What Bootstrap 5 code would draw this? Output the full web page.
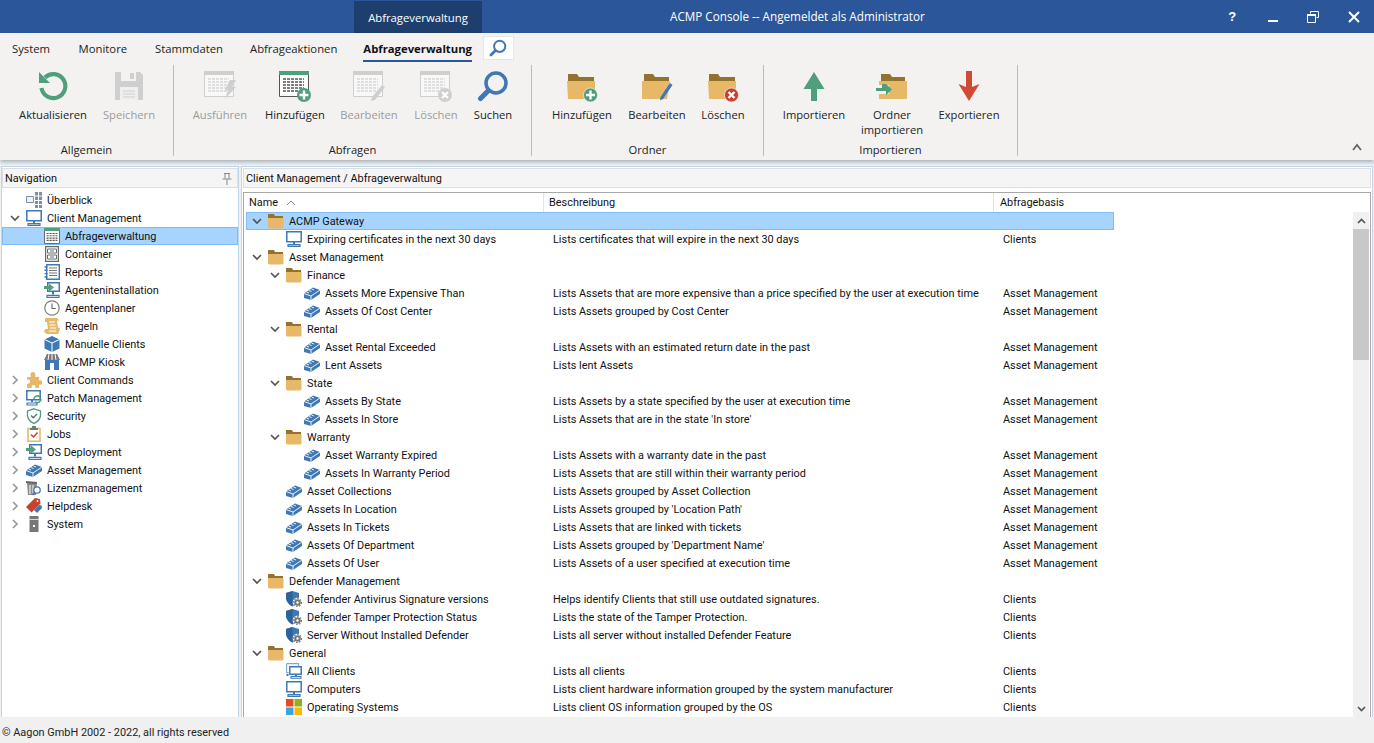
<!DOCTYPE html>
<html lang="de">
<head>
<meta charset="utf-8">
<title>ACMP Console</title>
<link href="https://cdn.jsdelivr.net/npm/bootstrap@5.3.0/dist/css/bootstrap.min.css" rel="stylesheet">
<style>
html,body{height:743px;overflow:hidden}
body{font-family:Roboto,"Liberation Sans",sans-serif;font-size:10.9px;color:#111;background:#f0f0f0;line-height:18px}
.titlebar{height:33px;background:#2b579a;color:#fff;flex:none;font-family:"Open Sans",sans-serif}
.ctxtab{margin-left:354px;margin-top:1px;width:128px;background:#1e3f6e;text-align:center;line-height:34px;font-size:11.3px}
.apptitle{margin-left:188px;width:540px;line-height:33px;font-size:11.7px}
.winbtn{width:40.5px;display:flex;align-items:center;justify-content:center;font-weight:700}
.winbtn svg{width:12px;height:12px}
.qhelp{font-size:13px;font-family:"Liberation Sans",sans-serif;margin-left:-7px}
.ribbon{background:#f3f2f1;height:127px;flex:none;box-shadow:0 2px 4px rgba(0,0,0,.28);position:relative;z-index:2;font-family:"Open Sans",sans-serif;font-size:11.2px}
.tabline{height:29px;padding-left:12px}
.rtab{margin-right:27px;line-height:15px;padding-top:8px;color:#222;font-size:11.3px}
.rtab.first{margin-right:28.5px}
.rtab.wide{margin-right:28px}
.rtab.tight{margin-right:26px}
.rtab.active{font-weight:700;margin-right:11px;position:relative;color:#111}
.rtab.active::after{content:"";position:absolute;left:0;right:0;top:27px;height:2px;background:#2b579a}
.searchbox{width:31px;height:24px;margin-top:3px;background:#fff;border:1px solid #e6e6e6;display:flex;align-items:center;justify-content:center}
.searchbox svg{width:18px;height:18px}
.rgroup{height:91px;border-right:1px solid #bdbbb9;margin-top:3px;flex:none;position:relative}
.rg1{width:174px;padding-left:15px}
.rg2{width:358px;padding-left:9px}
.rg3{width:232px;padding-left:13px}
.rg4{width:254px;padding-left:13px}
.rbtn{text-align:center;color:#222;line-height:15px;flex:none;padding-top:5px}
.rbtn svg{width:32px;height:32px;display:block;margin:0 auto 5px}
.rbtn.off{color:#9b9b9b}
.glabel{position:absolute;left:0;right:0;top:77px;text-align:center;color:#222;line-height:15px}
.w52{width:52px}.w56{width:56px}.w62{width:62px}.w72{width:72px}.w74{width:74px}.w76{width:76px}.w82{width:82px}
.collapser{position:absolute;right:12px;top:110px;width:10px;height:8px}
.mainarea{flex:1 1 auto;min-height:0;padding:6px 1px 0 1px;background:linear-gradient(#e9f1f8,#f0f0f0 6px);gap:1px}
.navpane{width:238px;flex:none;background:#fff;border:1px solid #bcd8ef;border-bottom:0;padding-top:1px}
.workpane{flex:1 1 auto;min-width:0;background:#fff;border:1px solid #bcd8ef;border-bottom:0;padding:1px 1px 0 1px;margin-left:1px}
.panehead{height:20px;background:#f5f5f5;border:1px solid #dedede;line-height:18px;padding:2px 0 0 2px;flex:none}
.panehead svg{width:12px;height:12px;margin-right:4px}
.navtree{padding-top:3px}
.trow{height:18px;white-space:nowrap;flex:none;padding-top:1px}
.trow .ic{width:16px;height:16px;flex:none;margin-right:5px}
.trow .chev{width:10px;height:10px;flex:none;margin:3px 6px 0 0}
.np0{padding-left:24px}.np1{padding-left:8px}.np2{padding-left:42px}
.rowsel{background:#a6d4fe;box-shadow:inset 0 0 0 1px #7fbcf5}
.gridbox{flex:1 1 auto;min-height:0;margin-top:4px;border:1px solid #a9a9a9;border-bottom:0}
.gridmain{width:1108px;flex:none;padding-left:2px}
.ghead{height:19px;width:868px;background:#fff}
.gh{border-right:1px solid #e3e3e3;padding-left:3px;line-height:20px;height:19px}
.gn{width:298px;flex:none}
.gd{width:450px;flex:none;padding-left:9px}
.gb{width:120px;flex:none;padding-left:9px}
.gdh{width:450px;padding-left:5px;flex:none}
.gbh{width:120px;padding-left:6px;flex:none;border-right:0}
.sort{width:10px;height:6px;margin-left:8px}
.grow{width:868px}
.gp0{padding-left:6px}.gp1{padding-left:24px}.gp1l{padding-left:40px}.gp2{padding-left:58px}
.scrollcol{width:16px;margin-left:1px;margin-top:19px;background:#f0f0f0;flex:none;position:relative}
.scrollup{height:17px;display:flex;align-items:center;justify-content:center}
.scrollup svg{width:9px;height:6px}
.scrollthumb{height:131px;background:#c8c8c8}
.scrolldn{position:absolute;left:0;right:0;bottom:0;height:17px;display:flex;align-items:center;justify-content:center}
.scrolldn svg{width:9px;height:6px}
.statusline{height:26px;flex:none;background:#f0f0f0;line-height:32px;padding-left:2px;color:#222}
</style>
</head>
<body class="d-flex flex-column">
<svg width="0" height="0" class="position-absolute">
<defs>
<symbol id="cd" viewBox="0 0 10 10"><path d="M1 3l4 4 4-4" fill="none" stroke="#555" stroke-width="1.700"/></symbol>
<symbol id="cr" viewBox="0 0 10 10"><path d="M3 1l4 4-4 4" fill="none" stroke="#999" stroke-width="1.700"/></symbol>
<symbol id="fold" viewBox="0 0 16 16"><path fill="#92722d" d="M0 1h6l1 2h8v4H0z"/><path fill="#e8b869" d="M0 5h15.500v9a1.500 1.500 0 0 1-1.500 1.500H1.500A1.500 1.500 0 0 1 0 14z"/></symbol>
<symbol id="mon" viewBox="0 0 16 16"><path fill="none" stroke="#3f78b5" stroke-width="1.500" d="M.8.800h14.400v10H.8z"/><path fill="#3f78b5" d="M7 11h2v2H7z"/><path fill="none" stroke="#3f78b5" stroke-width="1.200" d="M2 13.600h12v1.800H2z"/></symbol>
<symbol id="brick" viewBox="0 0 16 16"><path fill="#3f78b5" d="M0 8.500L9 2.500l7 2.500v4l-9 6L0 13z"/><path stroke="#fff" stroke-width=".9" fill="none" d="M7 11v4M0 8.500l7 2.500 9-6M2.500 7l2.500 1M5 5.500l2.500 1M7.500 4l2.500 1"/></symbol>
<symbol id="shield" viewBox="0 0 16 16"><path fill="#3f78b5" d="M6.500 0L13 2v5c-1 4-3.500 6.500-6.500 8.500C3 13.500.5 11 0 7V2z"/><path fill="#2d639c" d="M6.500 0v15.500C3 13.500.5 11 0 7V2z"/><circle cx="11.500" cy="11.500" r="4.800" fill="#fff"/><circle cx="11.500" cy="11.500" r="3.300" fill="#777"/><circle cx="11.500" cy="11.500" r="1.200" fill="#fff"/><circle cx="11.500" cy="11.500" r="4" fill="none" stroke="#777" stroke-width="1.200" stroke-dasharray="1.500 1.500"/></symbol>
<symbol id="allc" viewBox="0 0 16 16"><path fill="none" stroke="#7ea7d1" stroke-width="1.100" d="M.6.600h12v3M.6.600v9h2"/><path fill="none" stroke="#3f78b5" stroke-width="1.500" d="M3.800 3.800h11.400v7.500H3.800z"/><path fill="#3f78b5" d="M9 11.500h2v1.500H9z"/><path fill="none" stroke="#3f78b5" stroke-width="1.100" d="M5 13.500h10v1.800H5z"/><path fill="#3f78b5" d="M.5 11h2v2h-2z"/></symbol>
<symbol id="win" viewBox="0 0 16 16"><path fill="#e8491d" d="M0 0h7.500v7.500H0z"/><path fill="#8cb31c" d="M8.500 0H16v7.500H8.500z"/><path fill="#3aa5dc" d="M0 8.500h7.500V16H0z"/><path fill="#fbb900" d="M8.500 8.500H16V16H8.500z"/></symbol>
<symbol id="over" viewBox="0 0 16 16"><path fill="#eef2f6" stroke="#7c8ea3" d="M.5 4.500h7v6h-7z"/><path fill="#7c8ea3" d="M9 0h7v8H9zM9 9h7v7H9z"/><path stroke="#fff" d="M12.500 0v16M9 4h7M9 12.500h7"/></symbol>
<symbol id="qry" viewBox="0 0 16 16"><path fill="#fff" stroke="#6a6a6a" d="M.5.500h15v15H.5z"/><path fill="#4f9e7c" d="M0 0h16v3H0z"/><path stroke="#555" stroke-width="1.100" stroke-dasharray="2.200 .8" d="M2.500 5.500h11M2.500 7.800h11M2.500 10.100h11M2.500 12.400h11"/></symbol>
<symbol id="cont" viewBox="0 0 16 16"><path fill="#fff" stroke="#6a6a6a" stroke-width="1.200" d="M1.600.600h12.800v14.800H1.600z"/><path fill="none" stroke="#6a6a6a" d="M3.500 3h9v4h-9zM3.500 9h9v4h-9z"/><path fill="#3f78b5" d="M6 4.500h4v1H6zM6 10.500h4v1H6z"/></symbol>
<symbol id="rep" viewBox="0 0 16 16"><path fill="#fff" stroke="#3f78b5" stroke-width="1.400" d="M2.700.700h12.600v14.600H2.700z"/><path stroke="#777" d="M5 4h8M5 6.500h8M5 9h8M5 11.500h8"/><path stroke="#3f78b5" stroke-width="1.400" d="M.5 3h3M.5 6.300h3M.5 9.600h3M.5 13h3"/></symbol>
<symbol id="inst" viewBox="0 0 16 16"><path fill="#3f78b5" d="M3 0h13v10H3z"/><path fill="#fff" d="M4.500 1.500h10v7h-10z"/><path fill="#3f78b5" d="M8 10h2v2.500H8z"/><path fill="none" stroke="#3f78b5" stroke-width="1.200" d="M3 13.400h12v1.900H3z"/><path fill="#4f9e7c" d="M0 4h5V1.500L10 5.500l-5 4V7H0z"/></symbol>
<symbol id="clock" viewBox="0 0 16 16"><circle cx="8" cy="8" r="7.200" fill="#fff" stroke="#7d7d7d" stroke-width="1.200"/><path fill="none" stroke="#666" stroke-width="1.100" d="M8 3.500V8.500h3.800"/></symbol>
<symbol id="scroll" viewBox="0 0 16 16"><path fill="#e8b869" d="M2 0h11l2 2-2 1 1 7h2l-1 4-1 2H3L0 14l1-3h3L3 4H1V1z"/><path stroke="#fff" d="M5 4h6M5.500 7h6M6 10h6M5 13h7"/></symbol>
<symbol id="cube" viewBox="0 0 16 16"><path fill="#3f78b5" d="M8 0l7.500 3.500v9L8 16 .5 12.500v-9z"/><path stroke="#fff" fill="none" d="M.5 3.500L8 7l7.500-3.500M8 7v9"/></symbol>
<symbol id="kiosk" viewBox="0 0 16 16"><path fill="#3f78b5" d="M1 6h14v10H1z"/><path fill="#fff" d="M6 9h4v7H6z"/><path fill="#777" d="M3 0h10l3 6H0z"/><path stroke="#fff" stroke-width="1" d="M5 0L4 6M8 0v6M11 0l1 6"/></symbol>
<symbol id="puz" viewBox="0 0 16 16"><path fill="#e8b869" d="M1 5h4C4 3 4.500 0 7 0s3 3 2 5h4v3.500c2-1 3.500.2 3.500 2s-1.500 3-3.500 2V16H9c1-2 0-3-1.500-3S5 14 6 16H1v-4c2 0 3-1 3-2.500S3 7 1 8z"/></symbol>
<symbol id="patch" viewBox="0 0 16 16"><path fill="none" stroke="#3f78b5" stroke-width="1.500" d="M.8.800h13.400v9H.8z"/><path fill="#3f78b5" d="M5 10h2v2H5z"/><path fill="none" stroke="#3f78b5" stroke-width="1.100" d="M1 13h10v2H1z"/><path fill="none" stroke="#4f9e7c" stroke-width="1.600" d="M8 9a3.500 3.500 0 0 1 6-2M15 9a3.500 3.500 0 0 1-6 2.500"/></symbol>
<symbol id="sec" viewBox="0 0 16 16"><path fill="#fff" stroke="#4f9e7c" stroke-width="1.300" d="M8 .8l6.500 2.200v5c-.8 3.800-3.300 6-6.500 7.400C4.800 14 2.300 11.800 1.500 8V3z"/><path fill="none" stroke="#666" stroke-width="1.300" d="M5 7.500l2.300 2.300L11 6"/></symbol>
<symbol id="jobs" viewBox="0 0 16 16"><path fill="#fff" stroke="#e8b869" stroke-width="1.600" d="M2 2.500h12v12.700H2z"/><path fill="#777" d="M6 0h4v2h2v2H4V2h2z"/><path fill="none" stroke="#c9402c" stroke-width="1.500" d="M5 8.500l2.500 2.500L11.500 6.500"/></symbol>
<symbol id="lic" viewBox="0 0 16 16"><path fill="#8a8a8a" d="M1 3h10l-1 12H2z"/><path fill="#666" d="M0 1l11 1v2L0 3z"/><path stroke="#fff" d="M4 5v9M7 5v9"/><circle cx="11" cy="10" r="3.200" fill="#fff" stroke="#3f78b5" stroke-width="1.300"/><path stroke="#3f78b5" stroke-width="1.800" d="M8.500 12.500L6.500 15"/></symbol>
<symbol id="help" viewBox="0 0 16 16"><path fill="#c9402c" d="M0 9L9 0l5 1 .5 4.500L5.500 14.500z"/><circle cx="11.500" cy="3" r="1" fill="#fff"/><path fill="#3f78b5" d="M8 12l5-5 2.500.5.500 2.500-5 5z"/></symbol>
<symbol id="sys" viewBox="0 0 16 16"><path fill="#777" d="M3.500 0h9v16h-9z"/><path fill="#f3f3f3" d="M3.500 3h9v.8h-9z"/><rect x="7" y="9" width="2" height="2" fill="#fff"/></symbol>

<symbol id="r-refresh" viewBox="0 0 32 32"><path fill="none" stroke="#4f9e7c" stroke-width="4.200" d="M8 7.500A12 12 0 1 1 4.500 18"/><path fill="#4f9e7c" d="M2 2v11h11z"/></symbol>
<symbol id="r-save" viewBox="0 0 32 32"><path fill="#cfcfcf" d="M2 2h25l3 3v25H2z"/><path fill="#f3f2f1" d="M8 2h15v9H8z"/><path fill="#cfcfcf" d="M17 3h4v6h-4z"/><path fill="#efefef" d="M7 17h18v13H7z"/><path stroke="#cfcfcf" d="M10 21h12M10 24h12M10 27h12"/></symbol>
<symbol id="r-run" viewBox="0 0 32 32"><path fill="#f8f8f8" stroke="#cfcfcf" d="M.5 1.500h29v25H.5z"/><path fill="#cfcfcf" d="M0 1h30v4H0z"/><path stroke="#d6d6d6" stroke-width="1.300" stroke-dasharray="3 1" d="M4 9h21M4 12h21M4 15h21M4 18h21M4 21h21"/><path fill="#cfcfcf" d="M26 10h6l-4 7h4L21 29l3-9h-3z"/></symbol>
<symbol id="r-add" viewBox="0 0 32 32"><path fill="#fff" stroke="#555" d="M.5 1.500h29v25H.5z"/><path fill="#4f9e7c" d="M0 1h30v4H0z"/><path stroke="#555" stroke-width="1.300" stroke-dasharray="3 1" d="M4 9h21M4 12h21M4 15h21M4 18h21M4 21h21"/><circle cx="25" cy="25" r="7" fill="#4f9e7c"/><path stroke="#fff" stroke-width="2.400" d="M25 20.500v9M20.500 25h9"/></symbol>
<symbol id="r-edit" viewBox="0 0 32 32"><path fill="#f8f8f8" stroke="#cfcfcf" d="M.5 1.500h29v25H.5z"/><path fill="#cfcfcf" d="M0 1h30v4H0z"/><path stroke="#d6d6d6" stroke-width="1.300" stroke-dasharray="3 1" d="M4 9h21M4 12h21M4 15h21M4 18h21M4 21h21"/><path fill="#cfcfcf" d="M29 15l3 2-10 13-4 1 1-4z"/></symbol>
<symbol id="r-del" viewBox="0 0 32 32"><path fill="#f8f8f8" stroke="#cfcfcf" d="M.5 1.500h29v25H.5z"/><path fill="#cfcfcf" d="M0 1h30v4H0z"/><path stroke="#d6d6d6" stroke-width="1.300" stroke-dasharray="3 1" d="M4 9h21M4 12h21M4 15h21M4 18h21M4 21h21"/><circle cx="25" cy="25" r="7" fill="#cfcfcf"/><path stroke="#fff" stroke-width="2.200" d="M22 22l6 6M28 22l-6 6"/></symbol>
<symbol id="r-search" viewBox="0 0 32 32"><circle cx="19" cy="13" r="10" fill="none" stroke="#3f78b5" stroke-width="3.500"/><path stroke="#3f78b5" stroke-width="5" stroke-linecap="round" d="M11 21l-7.500 7.500"/></symbol>
<symbol id="r-fadd" viewBox="0 0 32 32"><path fill="#92722d" d="M2 4h9l2 3h15v6H2z"/><path fill="#e8b869" d="M1 11h28v18H2z"/><circle cx="24.500" cy="25" r="7" fill="#4f9e7c" stroke="#fff" stroke-width=".6"/><path stroke="#fff" stroke-width="2.400" d="M24.500 20.500v9M20 25h9"/></symbol>
<symbol id="r-fedit" viewBox="0 0 32 32"><path fill="#92722d" d="M3 4h9l2 3h14v6H3z"/><path fill="#e8b869" d="M1 11h28l-3 18H1z"/><path fill="#3f78b5" d="M29 13l2.500 2-9.500 14-3 1.500.5-3.500z"/></symbol>
<symbol id="r-fdel" viewBox="0 0 32 32"><path fill="#92722d" d="M2 4h9l2 3h15v6H2z"/><path fill="#e8b869" d="M1 11h28v18H2z"/><circle cx="24.500" cy="25" r="7" fill="#c9402c" stroke="#fff" stroke-width=".6"/><path stroke="#fff" stroke-width="2.400" d="M21.500 22l6 6M27.500 22l-6 6"/></symbol>
<symbol id="r-up" viewBox="0 0 32 32"><path fill="#4f9e7c" d="M16 2l10.500 17H19v12h-6V19H5.500z"/></symbol>
<symbol id="r-fimp" viewBox="0 0 32 32"><path fill="#92722d" d="M5 4h9l2 3h13v6H5z"/><path fill="#e8b869" d="M3 11h28v18H3z"/><path fill="#f3f2f1" d="M0 15h13v9H0z"/><path fill="#4f9e7c" d="M0 18h6v-4h4l6 5.500L10 25v-4H0z"/></symbol>
<symbol id="r-down" viewBox="0 0 32 32"><path fill="#d14b33" d="M13 1h6v16l7.500-3L16 31 5.500 14l7.500 3z"/></symbol>
</defs>
</svg>

<header class="titlebar d-flex">
  <div class="ctxtab">Abfrageverwaltung</div>
  <div class="apptitle text-nowrap">ACMP Console -- Angemeldet als Administrator</div>
  <div class="ms-auto d-flex me-0">
    <div class="winbtn qhelp">?</div>
    <div class="winbtn"><svg viewBox="0 0 12 12"><path fill="#fff" d="M1 9h10v2H1z"/></svg></div>
    <div class="winbtn"><svg viewBox="0 0 12 12"><path fill="none" stroke="#fff" d="M3.500 2.500V.5h8v6h-2M.5 3.500h8v8h-8z"/><path fill="#fff" d="M0 3h9v2H0z"/></svg></div>
    <div class="winbtn"><svg viewBox="0 0 12 12"><path stroke="#fff" stroke-width="2" d="M1 1l10 10M11 1L1 11"/></svg></div>
  </div>
</header>

<section class="ribbon">
  <div class="tabline d-flex">
    <div class="rtab first">System</div>
    <div class="rtab wide">Monitore</div>
    <div class="rtab">Stammdaten</div>
    <div class="rtab tight">Abfrageaktionen</div>
    <div class="rtab active">Abfrageverwaltung</div>
    <div class="searchbox"><svg><use href="#r-search"/></svg></div>
  </div>
  <div class="d-flex">
    <div class="rgroup rg1 d-flex">
      <div class="rbtn w76"><svg><use href="#r-refresh"/></svg>Aktualisieren</div>
      <div class="rbtn w76 off"><svg><use href="#r-save"/></svg>Speichern</div>
      <div class="glabel">Allgemein</div>
    </div>
    <div class="rgroup rg2 d-flex">
      <div class="rbtn w74 off"><svg><use href="#r-run"/></svg>Ausführen</div>
      <div class="rbtn w76"><svg><use href="#r-add"/></svg>Hinzufügen</div>
      <div class="rbtn w72 off"><svg><use href="#r-edit"/></svg>Bearbeiten</div>
      <div class="rbtn w62 off"><svg><use href="#r-del"/></svg>Löschen</div>
      <div class="rbtn w52"><svg><use href="#r-search"/></svg>Suchen</div>
      <div class="glabel">Abfragen</div>
    </div>
    <div class="rgroup rg3 d-flex">
      <div class="rbtn w74"><svg><use href="#r-fadd"/></svg>Hinzufügen</div>
      <div class="rbtn w76"><svg><use href="#r-fedit"/></svg>Bearbeiten</div>
      <div class="rbtn w56"><svg><use href="#r-fdel"/></svg>Löschen</div>
      <div class="glabel">Ordner</div>
    </div>
    <div class="rgroup rg4 d-flex">
      <div class="rbtn w74"><svg><use href="#r-up"/></svg>Importieren</div>
      <div class="rbtn w82"><svg><use href="#r-fimp"/></svg>Ordner importieren</div>
      <div class="rbtn w72"><svg><use href="#r-down"/></svg>Exportieren</div>
      <div class="glabel">Importieren</div>
    </div>
  </div>
  <svg class="collapser" viewBox="0 0 10 8"><path d="M1 7l4-5 4 5" fill="none" stroke="#666" stroke-width="1.800"/></svg>
</section>

<main class="mainarea d-flex">
  <aside class="navpane d-flex flex-column">
    <div class="panehead d-flex justify-content-between align-items-center">Navigation<svg viewBox="0 0 12 12"><path fill="none" stroke="#888" d="M3 .5h6M4 .5v5M8 .5v5M1.500 6h9M6 6v6"/></svg></div>
    <div class="navtree">
      <div class="trow d-flex np0"><svg class="ic"><use href="#over"/></svg>Überblick</div>
      <div class="trow d-flex np1"><svg class="chev"><use href="#cd"/></svg><svg class="ic"><use href="#mon"/></svg>Client Management</div>
      <div class="trow d-flex np2 rowsel"><svg class="ic"><use href="#qry"/></svg>Abfrageverwaltung</div>
      <div class="trow d-flex np2"><svg class="ic"><use href="#cont"/></svg>Container</div>
      <div class="trow d-flex np2"><svg class="ic"><use href="#rep"/></svg>Reports</div>
      <div class="trow d-flex np2"><svg class="ic"><use href="#inst"/></svg>Agenteninstallation</div>
      <div class="trow d-flex np2"><svg class="ic"><use href="#clock"/></svg>Agentenplaner</div>
      <div class="trow d-flex np2"><svg class="ic"><use href="#scroll"/></svg>Regeln</div>
      <div class="trow d-flex np2"><svg class="ic"><use href="#cube"/></svg>Manuelle Clients</div>
      <div class="trow d-flex np2"><svg class="ic"><use href="#kiosk"/></svg>ACMP Kiosk</div>
      <div class="trow d-flex np1"><svg class="chev"><use href="#cr"/></svg><svg class="ic"><use href="#puz"/></svg>Client Commands</div>
      <div class="trow d-flex np1"><svg class="chev"><use href="#cr"/></svg><svg class="ic"><use href="#patch"/></svg>Patch Management</div>
      <div class="trow d-flex np1"><svg class="chev"><use href="#cr"/></svg><svg class="ic"><use href="#sec"/></svg>Security</div>
      <div class="trow d-flex np1"><svg class="chev"><use href="#cr"/></svg><svg class="ic"><use href="#jobs"/></svg>Jobs</div>
      <div class="trow d-flex np1"><svg class="chev"><use href="#cr"/></svg><svg class="ic"><use href="#inst"/></svg>OS Deployment</div>
      <div class="trow d-flex np1"><svg class="chev"><use href="#cr"/></svg><svg class="ic"><use href="#brick"/></svg>Asset Management</div>
      <div class="trow d-flex np1"><svg class="chev"><use href="#cr"/></svg><svg class="ic"><use href="#lic"/></svg>Lizenzmanagement</div>
      <div class="trow d-flex np1"><svg class="chev"><use href="#cr"/></svg><svg class="ic"><use href="#help"/></svg>Helpdesk</div>
      <div class="trow d-flex np1"><svg class="chev"><use href="#cr"/></svg><svg class="ic"><use href="#sys"/></svg>System</div>
    </div>
  </aside>
  <section class="workpane d-flex flex-column">
    <div class="panehead d-flex align-items-center">Client Management / Abfrageverwaltung</div>
    <div class="gridbox d-flex">
      <div class="gridmain">
        <div class="ghead d-flex">
          <div class="gh gn d-flex align-items-center">Name<svg class="sort" viewBox="0 0 10 6"><path d="M1 5l4-4 4 4" fill="none" stroke="#888"/></svg></div>
          <div class="gh gdh">Beschreibung</div>
          <div class="gh gbh">Abfragebasis</div>
        </div>
        <div class="trow grow d-flex rowsel"><div class="gn d-flex gp0"><svg class="chev"><use href="#cd"/></svg><svg class="ic"><use href="#fold"/></svg>ACMP Gateway</div></div>
        <div class="trow grow d-flex"><div class="gn d-flex gp1l"><svg class="ic"><use href="#mon"/></svg>Expiring certificates in the next 30 days</div><div class="gd">Lists certificates that will expire in the next 30 days</div><div class="gb">Clients</div></div>
        <div class="trow grow d-flex"><div class="gn d-flex gp0"><svg class="chev"><use href="#cd"/></svg><svg class="ic"><use href="#fold"/></svg>Asset Management</div></div>
        <div class="trow grow d-flex"><div class="gn d-flex gp1"><svg class="chev"><use href="#cd"/></svg><svg class="ic"><use href="#fold"/></svg>Finance</div></div>
        <div class="trow grow d-flex"><div class="gn d-flex gp2"><svg class="ic"><use href="#brick"/></svg>Assets More Expensive Than</div><div class="gd">Lists Assets that are more expensive than a price specified by the user at execution time</div><div class="gb">Asset Management</div></div>
        <div class="trow grow d-flex"><div class="gn d-flex gp2"><svg class="ic"><use href="#brick"/></svg>Assets Of Cost Center</div><div class="gd">Lists Assets grouped by Cost Center</div><div class="gb">Asset Management</div></div>
        <div class="trow grow d-flex"><div class="gn d-flex gp1"><svg class="chev"><use href="#cd"/></svg><svg class="ic"><use href="#fold"/></svg>Rental</div></div>
        <div class="trow grow d-flex"><div class="gn d-flex gp2"><svg class="ic"><use href="#brick"/></svg>Asset Rental Exceeded</div><div class="gd">Lists Assets with an estimated return date in the past</div><div class="gb">Asset Management</div></div>
        <div class="trow grow d-flex"><div class="gn d-flex gp2"><svg class="ic"><use href="#brick"/></svg>Lent Assets</div><div class="gd">Lists lent Assets</div><div class="gb">Asset Management</div></div>
        <div class="trow grow d-flex"><div class="gn d-flex gp1"><svg class="chev"><use href="#cd"/></svg><svg class="ic"><use href="#fold"/></svg>State</div></div>
        <div class="trow grow d-flex"><div class="gn d-flex gp2"><svg class="ic"><use href="#brick"/></svg>Assets By State</div><div class="gd">Lists Assets by a state specified by the user at execution time</div><div class="gb">Asset Management</div></div>
        <div class="trow grow d-flex"><div class="gn d-flex gp2"><svg class="ic"><use href="#brick"/></svg>Assets In Store</div><div class="gd">Lists Assets that are in the state 'In store'</div><div class="gb">Asset Management</div></div>
        <div class="trow grow d-flex"><div class="gn d-flex gp1"><svg class="chev"><use href="#cd"/></svg><svg class="ic"><use href="#fold"/></svg>Warranty</div></div>
        <div class="trow grow d-flex"><div class="gn d-flex gp2"><svg class="ic"><use href="#brick"/></svg>Asset Warranty Expired</div><div class="gd">Lists Assets with a warranty date in the past</div><div class="gb">Asset Management</div></div>
        <div class="trow grow d-flex"><div class="gn d-flex gp2"><svg class="ic"><use href="#brick"/></svg>Assets In Warranty Period</div><div class="gd">Lists Assets that are still within their warranty period</div><div class="gb">Asset Management</div></div>
        <div class="trow grow d-flex"><div class="gn d-flex gp1l"><svg class="ic"><use href="#brick"/></svg>Asset Collections</div><div class="gd">Lists Assets grouped by Asset Collection</div><div class="gb">Asset Management</div></div>
        <div class="trow grow d-flex"><div class="gn d-flex gp1l"><svg class="ic"><use href="#brick"/></svg>Assets In Location</div><div class="gd">Lists Assets grouped by 'Location Path'</div><div class="gb">Asset Management</div></div>
        <div class="trow grow d-flex"><div class="gn d-flex gp1l"><svg class="ic"><use href="#brick"/></svg>Assets In Tickets</div><div class="gd">Lists Assets that are linked with tickets</div><div class="gb">Asset Management</div></div>
        <div class="trow grow d-flex"><div class="gn d-flex gp1l"><svg class="ic"><use href="#brick"/></svg>Assets Of Department</div><div class="gd">Lists Assets grouped by 'Department Name'</div><div class="gb">Asset Management</div></div>
        <div class="trow grow d-flex"><div class="gn d-flex gp1l"><svg class="ic"><use href="#brick"/></svg>Assets Of User</div><div class="gd">Lists Assets of a user specified at execution time</div><div class="gb">Asset Management</div></div>
        <div class="trow grow d-flex"><div class="gn d-flex gp0"><svg class="chev"><use href="#cd"/></svg><svg class="ic"><use href="#fold"/></svg>Defender Management</div></div>
        <div class="trow grow d-flex"><div class="gn d-flex gp1l"><svg class="ic"><use href="#shield"/></svg>Defender Antivirus Signature versions</div><div class="gd">Helps identify Clients that still use outdated signatures.</div><div class="gb">Clients</div></div>
        <div class="trow grow d-flex"><div class="gn d-flex gp1l"><svg class="ic"><use href="#shield"/></svg>Defender Tamper Protection Status</div><div class="gd">Lists the state of the Tamper Protection.</div><div class="gb">Clients</div></div>
        <div class="trow grow d-flex"><div class="gn d-flex gp1l"><svg class="ic"><use href="#shield"/></svg>Server Without Installed Defender</div><div class="gd">Lists all server without installed Defender Feature</div><div class="gb">Clients</div></div>
        <div class="trow grow d-flex"><div class="gn d-flex gp0"><svg class="chev"><use href="#cd"/></svg><svg class="ic"><use href="#fold"/></svg>General</div></div>
        <div class="trow grow d-flex"><div class="gn d-flex gp1l"><svg class="ic"><use href="#allc"/></svg>All Clients</div><div class="gd">Lists all clients</div><div class="gb">Clients</div></div>
        <div class="trow grow d-flex"><div class="gn d-flex gp1l"><svg class="ic"><use href="#mon"/></svg>Computers</div><div class="gd">Lists client hardware information grouped by the system manufacturer</div><div class="gb">Clients</div></div>
        <div class="trow grow d-flex"><div class="gn d-flex gp1l"><svg class="ic"><use href="#win"/></svg>Operating Systems</div><div class="gd">Lists client OS information grouped by the OS</div><div class="gb">Clients</div></div>
      </div>
      <div class="scrollcol">
        <div class="scrollup"><svg viewBox="0 0 9 6"><path d="M1 5l3.500-3.500L8 5" fill="none" stroke="#555" stroke-width="1.700"/></svg></div>
        <div class="scrollthumb"></div>
        <div class="scrolldn"><svg viewBox="0 0 9 6"><path d="M1 1l3.500 3.500L8 1" fill="none" stroke="#555" stroke-width="1.700"/></svg></div>
      </div>
    </div>
  </section>
</main>
<footer class="statusline">© Aagon GmbH 2002 - 2022, all rights reserved</footer>
</body>
</html>
